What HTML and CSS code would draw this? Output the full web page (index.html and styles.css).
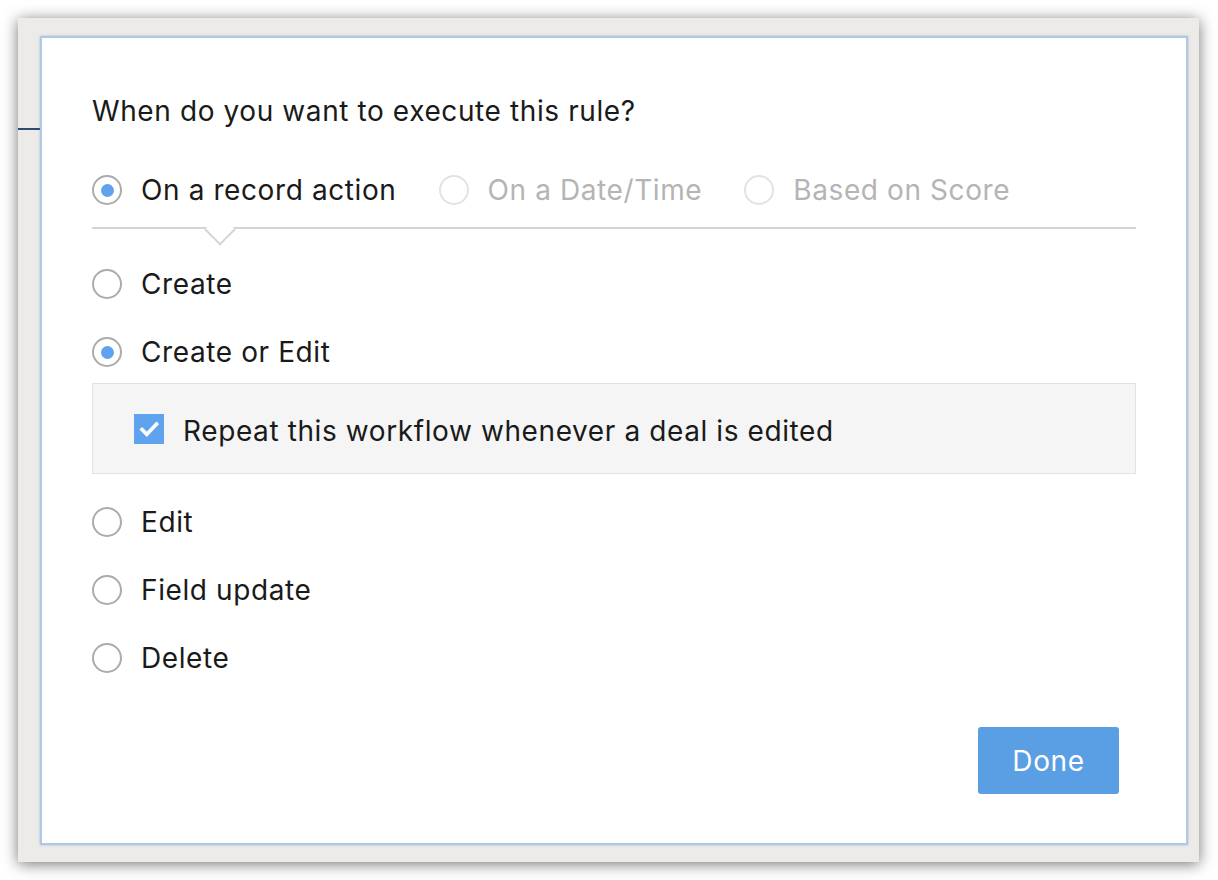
FILE: index.html
```html
<!DOCTYPE html>
<html lang="en">
<head>
<meta charset="utf-8">
<title>Workflow rule</title>
<link rel="stylesheet" href="styles.css">
</head>
<body>
<div class="frame">
  <div class="dialog">
    <h1 class="title">When do you want to execute this rule?</h1>
    <div class="tabs">
      <label class="opt"><span class="radio checked"></span><span class="lbl">On a record action</span></label>
      <label class="opt disabled"><span class="radio"></span><span class="lbl">On a Date/Time</span></label>
      <label class="opt disabled"><span class="radio"></span><span class="lbl">Based on Score</span></label>
    </div>
    <div class="sep"></div>
    <div class="options">
      <label class="opt row"><span class="radio"></span><span class="lbl">Create</span></label>
      <label class="opt row"><span class="radio checked"></span><span class="lbl">Create or Edit</span></label>
      <div class="subbox">
        <span class="check"><svg width="30" height="30" viewBox="0 0 30 30"><path d="M8 15.5 L12.8 20.3 L22.5 10" fill="none" stroke="#fff" stroke-width="3.6" stroke-linecap="square"/></svg></span>
        <span class="lbl">Repeat this workflow whenever a deal is edited</span>
      </div>
      <label class="opt row"><span class="radio"></span><span class="lbl">Edit</span></label>
      <label class="opt row"><span class="radio"></span><span class="lbl">Field update</span></label>
      <label class="opt row"><span class="radio"></span><span class="lbl">Delete</span></label>
    </div>
    <div class="actions">
      <button class="done">Done</button>
    </div>
  </div>
</div>
</body>
</html>
```

FILE: styles.css
```css
html, body {
  margin: 0;
  padding: 0;
  background: #ffffff;
}
body {
  width: 1218px;
  height: 880px;
  overflow: hidden;
  font-family: Inter, "Open Sans", sans-serif;
  color: #1a1a1a;
}
.frame {
  box-sizing: border-box;
  margin: 18px 0 0 18px;
  width: 1181px;
  height: 844px;
  padding: 18px 11px 17px 22px;
  background-color: #ecebe7;
  background-image: linear-gradient(#2d4a70, #2d4a70);
  background-repeat: no-repeat;
  background-position: 0 110px;
  background-size: 22px 2px;
  box-shadow: 0 2px 14px rgba(0, 0, 0, 0.55);
}
.dialog {
  box-sizing: border-box;
  height: 809px;
  border: 2px solid #aec9e6;
  box-shadow: 0 0 2px rgba(110, 150, 200, 0.6);
  background: #ffffff;
  padding: 55px 50px 0 50px;
  display: flex;
  flex-direction: column;
}
.title {
  margin: 0;
  font-size: 28px;
  font-weight: 400;
  letter-spacing: 0.6px;
  line-height: 36px;
  height: 36px;
}
.tabs {
  margin-top: 41px;
  display: flex;
  gap: 42px;
  height: 40px;
  align-items: center;
}
.opt {
  display: flex;
  align-items: center;
  gap: 19px;
  font-size: 28px;
  letter-spacing: 0.6px;
  line-height: 40px;
  height: 40px;
}
.opt.disabled {
  color: #b4b4b4;
}
.radio {
  box-sizing: border-box;
  width: 30px;
  height: 30px;
  border-radius: 50%;
  border: 2px solid #ababab;
  background: #fff;
  display: flex;
  align-items: center;
  justify-content: center;
  flex: none;
}
.opt.disabled .radio {
  border-color: #e2e2e2;
}
.radio.checked::after {
  content: "";
  width: 13px;
  height: 13px;
  border-radius: 50%;
  background: #5fa3ef;
}
.sep {
  position: relative;
  margin-top: 17px;
  height: 0;
  border-top: 2px solid #d4d4d4;
}
.sep::after {
  content: "";
  position: absolute;
  left: 128px;
  top: 1px;
  width: 22px;
  height: 22px;
  background: #fff;
  border-right: 2px solid #d4d4d4;
  border-bottom: 2px solid #d4d4d4;
  transform: translate(-50%, -50%) rotate(45deg);
  box-sizing: border-box;
}
.options {
  display: flex;
  flex-direction: column;
  margin-top: 7px;
}
.row {
  margin-top: 28px;
}
.subbox {
  box-sizing: border-box;
  margin-top: 11px;
  height: 91px;
  background: #f5f5f5;
  border: 1px solid #e2e2e2;
  padding-left: 41px;
  display: flex;
  align-items: center;
  gap: 19px;
  font-size: 28px;
  letter-spacing: 0.6px;
}
.subbox .lbl {
  padding-top: 4px;
}
.check {
  width: 30px;
  height: 30px;
  background: #5fa3ef;
  display: block;
  flex: none;
}
.check svg {
  display: block;
}
.actions {
  display: flex;
  justify-content: flex-end;
  margin-top: 49px;
  padding-right: 17px;
}
.done {
  width: 141px;
  height: 67px;
  border: none;
  border-radius: 3px;
  background: #5a9fe3;
  color: #ffffff;
  font-family: Inter, "Open Sans", sans-serif;
  font-size: 28px;
  letter-spacing: 0.6px;
  padding: 0;
}
```
